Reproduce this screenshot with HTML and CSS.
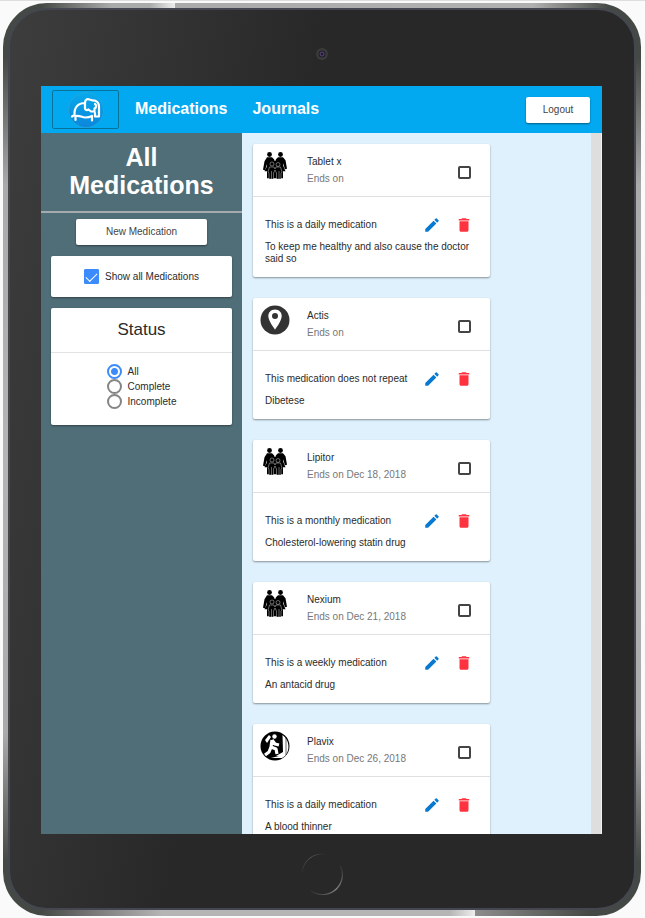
FILE: index.html
```html
<!DOCTYPE html>
<html lang="en">
<head>
<meta charset="utf-8">
<title>All Medications</title>
<link rel="stylesheet" href="styles.css">
</head>
<body>
<svg class="sprite" aria-hidden="true">
  <symbol id="pencil" viewBox="0 0 24 24"><path d="M3 17.25V21h3.75L17.81 9.94l-3.75-3.75L3 17.25zM20.71 7.04a1 1 0 0 0 0-1.41l-2.34-2.34a1 1 0 0 0-1.41 0l-1.83 1.83 3.75 3.75 1.83-1.83z"/></symbol>
  <symbol id="trash" viewBox="0 0 24 24"><path d="M6 19c0 1.100.9 2 2 2h8c1.100 0 2-.9 2-2V7H6v12zM19 4h-3.500l-1-1h-5l-1 1H5v2h14V4z"/></symbol>
  <symbol id="family" viewBox="0 0 30 30">
    <circle cx="9.500" cy="3.500" r="2.400"/><circle cx="20.500" cy="3.500" r="2.400"/>
    <path d="M7 6.300h5l2 2 1 2 1-2 2-2h5l2.500 3 1.500 8.500-2 .5-2-6v2l2.500 6H23v7h-2.500v-6h-1v6H10.500v-6h-1v6H7v-7H4.500L7 15.300v-2l-2 6-2-.5 1.500-8.500z"/>
    <g stroke="#fff" stroke-width=".4"><circle cx="12" cy="13" r="2"/><circle cx="18" cy="13.500" r="2"/><path d="M9.500 16h4.500l1 2 1-2h4.500l1.500 5-1 1v6h-4.500v-6l-1.500-3-1.500 3v6H9v-6l-1-1z"/></g>
    <path d="M11.500 20v8M19 20v8M15 7v3" stroke="#fff" stroke-width=".4"/>
  </symbol>
  <symbol id="place" viewBox="0 0 30 30">
    <circle cx="15" cy="15" r="14.500" fill="#333"/>
    <path d="M15 4.500c-4 0-6.700 2.900-6.700 6.500 0 5 6.700 13.500 6.700 13.500S21.700 16 21.700 11c0-3.600-2.700-6.500-6.700-6.500z" fill="#fff"/><circle cx="15" cy="11" r="3" fill="#333"/>
  </symbol>
  <symbol id="stairs" viewBox="0 0 30 30">
    <circle cx="15" cy="15" r="14.500"/>
    <path d="M22.500 4C30 9 30 20 25 25h-9l7-4zM11 27l8-2h6l-3 2z" fill="#fff"/><path d="M26 6v18" stroke="#000" stroke-width=".6"/>
    <circle cx="14.500" cy="5.500" r="2.200" fill="#fff"/>
    <path d="M5 9l4-5 2 2-4 6z" fill="#fff"/>
    <path d="M12 9l-1 7 5 2 1 5M11 16l-2 5-4 3M12 9l3 4 4 1" fill="none" stroke="#fff" stroke-width="3.200" stroke-linejoin="round"/>
  </symbol>
</svg>
<div class="tablet">
  <div class="bezel">
    <div class="bezel-top">
      <svg class="camera" viewBox="0 0 12 12" aria-hidden="true"><circle cx="6" cy="6" r="6" fill="#3b3b3c"/><circle cx="6" cy="6" r="3.500" fill="#211c2c"/><circle cx="6" cy="6" r="2" fill="none" stroke="#5b4a78"/></svg>
    </div>
    <div class="screen">
      <header class="topbar">
        <a class="logo" href="#" aria-label="Home">
          <svg viewBox="0 0 36 36" aria-hidden="true">
            <defs><linearGradient id="disc" x1="0" y1="0" x2="0" y2="1"><stop offset="0" stop-color="#08a9ec"/><stop offset="1" stop-color="#0b86dc"/></linearGradient></defs>
            <circle cx="18" cy="18" r="17.500" fill="url(#disc)" stroke="#2fa9d4" stroke-width=".6"/>
            <path d="M4 24.500 6.500 23C6 16 9.500 11 17 11M7.500 28v-4c4-1 6 1.500 10 1.500 3 0 4.500-.5 6.500-1.500v4.500M17 11C17 7.500 19 6.500 21.500 7.500L24 8.300C29 8 31 11 31 15v9.500h-4v-3.500M17 11v5.500c0 1.500 2 2 3.500 1L23 19.500h3.500V16.500C28.500 16 28.500 13 27 12" fill="none" stroke="#fff" stroke-width="2.200" stroke-linecap="round" stroke-linejoin="round"/>
          </svg>
        </a>
        <nav class="nav"><a href="#">Medications</a><a href="#">Journals</a></nav>
        <button class="btn logout" type="button">Logout</button>
      </header>
      <div class="content">
        <aside class="sidebar">
          <h1>All Medications</h1>
          <div class="tools">
            <button class="btn new" type="button">New Medication</button>
            <section class="panel show-all">
              <input class="check" type="checkbox" id="show" checked><label for="show">Show all Medications</label>
            </section>
            <section class="panel">
              <h2>Status</h2>
              <div class="radios">
                <label><input type="radio" name="status" checked>All</label>
                <label><input type="radio" name="status">Complete</label>
                <label><input type="radio" name="status">Incomplete</label>
              </div>
            </section>
          </div>
        </aside>
        <main class="list">
          <article class="card">
            <div class="card-head"><svg class="avatar" aria-hidden="true"><use href="#family"/></svg><div class="title"><h3>Tablet x</h3><p>Ends on</p></div><input type="checkbox" aria-label="Complete Tablet x"></div>
            <div class="card-body"><div class="row"><p>This is a daily medication</p><button class="edit" type="button" aria-label="Edit"><svg><use href="#pencil"/></svg></button><button class="delete" type="button" aria-label="Delete"><svg><use href="#trash"/></svg></button></div><p>To keep me healthy and also cause the doctor said so</p></div>
          </article>
          <article class="card">
            <div class="card-head"><svg class="avatar" aria-hidden="true"><use href="#place"/></svg><div class="title"><h3>Actis</h3><p>Ends on</p></div><input type="checkbox" aria-label="Complete Actis"></div>
            <div class="card-body"><div class="row"><p>This medication does not repeat</p><button class="edit" type="button" aria-label="Edit"><svg><use href="#pencil"/></svg></button><button class="delete" type="button" aria-label="Delete"><svg><use href="#trash"/></svg></button></div><p>Dibetese</p></div>
          </article>
          <article class="card">
            <div class="card-head"><svg class="avatar" aria-hidden="true"><use href="#family"/></svg><div class="title"><h3>Lipitor</h3><p>Ends on Dec 18, 2018</p></div><input type="checkbox" aria-label="Complete Lipitor"></div>
            <div class="card-body"><div class="row"><p>This is a monthly medication</p><button class="edit" type="button" aria-label="Edit"><svg><use href="#pencil"/></svg></button><button class="delete" type="button" aria-label="Delete"><svg><use href="#trash"/></svg></button></div><p>Cholesterol-lowering statin drug</p></div>
          </article>
          <article class="card">
            <div class="card-head"><svg class="avatar" aria-hidden="true"><use href="#family"/></svg><div class="title"><h3>Nexium</h3><p>Ends on Dec 21, 2018</p></div><input type="checkbox" aria-label="Complete Nexium"></div>
            <div class="card-body"><div class="row"><p>This is a weekly medication</p><button class="edit" type="button" aria-label="Edit"><svg><use href="#pencil"/></svg></button><button class="delete" type="button" aria-label="Delete"><svg><use href="#trash"/></svg></button></div><p>An antacid drug</p></div>
          </article>
          <article class="card">
            <div class="card-head"><svg class="avatar" aria-hidden="true"><use href="#stairs"/></svg><div class="title"><h3>Plavix</h3><p>Ends on Dec 26, 2018</p></div><input type="checkbox" aria-label="Complete Plavix"></div>
            <div class="card-body"><div class="row"><p>This is a daily medication</p><button class="edit" type="button" aria-label="Edit"><svg><use href="#pencil"/></svg></button><button class="delete" type="button" aria-label="Delete"><svg><use href="#trash"/></svg></button></div><p>A blood thinner</p></div>
          </article>
        </main>
        <div class="track"></div>
      </div>
    </div>
    <div class="bezel-bottom">
      <svg class="home" viewBox="0 0 42 42" aria-hidden="true">
        <defs><linearGradient id="ringA" x1="0" y1="1" x2="1" y2="0"><stop offset="0" stop-color="#282828"/><stop offset=".6" stop-color="#555"/><stop offset="1" stop-color="#282828"/></linearGradient>
        <linearGradient id="ringB" x1="1" y1="0" x2="0" y2="1"><stop offset="0" stop-color="#282828"/><stop offset=".5" stop-color="#888"/><stop offset="1" stop-color="#282828"/></linearGradient></defs>
        <path d="M1 22A20 20 0 0 1 25 1.400" fill="none" stroke="url(#ringA)"/>
        <path d="M39 12A20 20 0 0 1 10 38" fill="none" stroke="url(#ringB)" stroke-width="1.300"/>
      </svg>
    </div>
  </div>
</div>
</body>
</html>
```
FILE: styles.css
```css
* { box-sizing: border-box; }
body {
  margin: 0;
  padding: 2px 4px 2px 3px;
  height: 100vh;
  display: flex;
  background: #fafafa;
  border-top: 1px solid #dedede;
  font: 10px/12px "Liberation Sans", Arial, sans-serif;
  color: #2b2b2b;
}
h1, h2, h3, p { margin: 0; font-weight: 400; }
.sprite { position: absolute; width: 0; height: 0; }

.tablet {
  flex: 1;
  display: flex;
  min-width: 0;
  padding: 5px 5px 6px;
  border-radius: 44px;
  background:
    linear-gradient(to right, #454945 6%, #a9abaa 17%, #a9abaa 23%, #eee 27%, #aaa 27%, #b0b0b0 83%, #747773 90%, #454945 95%) top / 100% 6px no-repeat,
    linear-gradient(to right, #454945 6%, #777 14%, #b5b5b5 25%, #b5b5b5 70%, #eee 74%, #8c8c8c 74%, #454945 92%) bottom / 100% 7px no-repeat,
    linear-gradient(#454945 6%, #aaa 20%, #b4b4b4 50%, #aaa 80%, #454945 94%);
}
.bezel {
  flex: 1;
  min-width: 0;
  display: flex;
  flex-direction: column;
  padding: 0 32px 0 31px;
  border: 2px solid #444750;
  border-radius: 39px;
  background: linear-gradient(100deg, #3d3d3d, #303030 25%, #282828 40%);
}
.bezel-top, .bezel-bottom { display: flex; justify-content: center; align-items: center; flex: none; }
.bezel-top { height: 76px; padding-bottom: 12px; }
.bezel-bottom { height: 74px; }
.camera { width: 12px; height: 12px; margin-top: 24px; }
.home { width: 42px; height: 42px; margin-top: 5px; }

.screen { flex: 1; min-height: 0; display: flex; flex-direction: column; overflow: hidden; }
.topbar { flex: none; display: flex; align-items: center; height: 47px; padding: 0 12px 0 11px; background: #03a9f0; }
.logo { display: flex; justify-content: center; align-items: center; width: 67px; height: 39px; border: 1px solid #087299; border-radius: 2px; }
.logo svg { width: 36px; height: 36px; }
.nav { display: flex; flex: 1; gap: 25px; padding: 0 0 2px 16px; }
.nav a { color: #fff; font: bold 16px/20px "Liberation Sans", Arial, sans-serif; text-decoration: none; }
.btn { height: 26px; border: 0; border-radius: 2px; background: #fff; color: #444; font: inherit; box-shadow: 0 1px 2px rgba(0, 0, 0, .45); }
.logout { width: 64px; }

.content { flex: 1; min-height: 0; display: grid; grid-template-columns: 201px 1fr 11px; }
.sidebar { background: #506e78; }
.sidebar h1 { padding: 10px 20px 12px; border-bottom: 2px solid #a5abad; color: #fff; font-size: 25px; line-height: 28px; font-weight: 700; text-align: center; }
.tools { display: flex; flex-direction: column; gap: 11px; padding: 6px 10px; }
.new { align-self: center; width: 131px; }
.panel { border-radius: 2px; background: #fff; box-shadow: 0 1px 2px rgba(0, 0, 0, .4); }
.show-all { display: flex; justify-content: center; align-items: center; gap: 6px; height: 41px; }
.check { display: grid; place-items: center; appearance: none; width: 15px; height: 15px; margin: 0; border-radius: 1px; border: 1px solid #3b8bfc; }
.check:checked { background: #3b8bfc; }
.check:checked::before { content: ""; width: 10px; height: 5px; border: solid #fff; border-width: 0 0 1px 1px; transform: translateY(-1px) rotate(-45deg); }
.panel h2 { height: 45px; border-bottom: 1px solid #e2e2e2; font-size: 17px; line-height: 43px; text-align: center; }
.radios { width: max-content; margin: 0 auto; padding: 11px 0 16px; }
.radios label { display: flex; align-items: center; gap: 6px; height: 15px; }
.radios input { appearance: none; width: 15px; height: 15px; margin: 0; border: 2px solid #858585; border-radius: 50%; background: #fff; }
.radios input:checked { border-color: #3b8bfc; background: radial-gradient(circle, #3b8bfc 3px, #fff 4px); }

.list { min-width: 0; overflow: hidden; display: flex; flex-direction: column; gap: 21px; padding: 11px 13px 0 11px; background: #dff1fc; }
.card { flex: none; width: 73%; background: #fff; border-radius: 2px; box-shadow: 0 1px 2px rgba(0, 0, 0, .4); }
.card-head { display: flex; align-items: center; height: 53px; padding: 0 19px 0 7px; border-bottom: 1px solid #e0e0e0; }
.avatar { flex: none; align-self: flex-start; width: 30px; height: 30px; margin-top: 7px; }
.title { flex: 1; padding-left: 17px; line-height: 17px; }
.title h3 { font-size: 10px; }
.title p { color: #777; }
.card-head input { appearance: none; width: 13px; height: 13px; margin: 5px 0 0; border: 2px solid #444; border-radius: 2px; background: #fff; }
.card-body { display: flex; flex-direction: column; gap: 7px; padding: 19px 0 12px 12px; }
.card-body > p { padding-right: 10px; }
.row { display: flex; align-items: center; height: 18px; padding-right: 17px; gap: 14px; }
.row p { flex: 1; white-space: nowrap; }
.row button { display: flex; padding: 0; border: 0; background: none; }
.row svg { width: 18px; height: 18px; fill: currentColor; }
.edit { color: #0879d0; }
.delete { color: #ff3340; }
.track { background: #dedede; border-right: 1px solid #f2f2f2; }
```
